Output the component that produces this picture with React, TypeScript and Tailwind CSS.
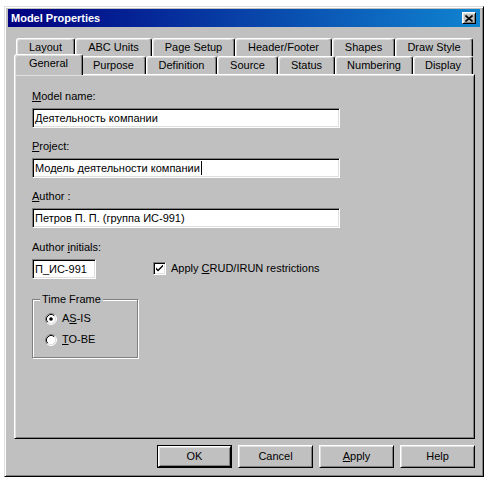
import { FC, ReactNode } from "react";

type TabDef = { label: ReactNode; w: string; active?: boolean };

const backRow: TabDef[] = [
  { label: "Layout", w: "w-[59px]" },
  { label: "ABC Units", w: "w-[77px]" },
  { label: "Page Setup", w: "w-[83px]" },
  { label: "Header/Footer", w: "w-[97px]" },
  { label: "Shapes", w: "w-[63px]" },
  { label: "Draw Style", w: "w-[78px]" }
];

const frontRow: TabDef[] = [
  { label: "General", w: "w-[69px]", active: true },
  { label: "Purpose", w: "w-[65px]" },
  { label: "Definition", w: "w-[71px]" },
  { label: "Source", w: "w-[61px]" },
  { label: "Status", w: "w-[57px]" },
  { label: "Numbering", w: "w-[78px]" },
  { label: "Display", w: "w-[60px]" }
];

const raised =
  "border border-t-white border-l-white border-r-black border-b-black shadow-[inset_1px_1px_#dfdfdf,inset_-1px_-1px_#808080]";
const sunken =
  "border border-t-[#808080] border-l-[#808080] border-r-white border-b-white shadow-[inset_1px_1px_#000,inset_-1px_-1px_#dfdfdf]";

const Tab: FC<TabDef> = ({ label, w, active }) =>
  active ? (
    <div
      className={`relative z-10 -mx-[2px] -mt-[2px] flex h-[21px] ${w} items-start justify-center rounded-t-[3px] border-l border-r border-t border-l-white border-r-black border-t-white bg-[#c0c0c0] pt-[2px] shadow-[inset_-1px_0_#808080,inset_1px_1px_#dfdfdf]`}
    >
      {label}
    </div>
  ) : (
    <div
      className={`flex h-[18px] ${w} items-center justify-center rounded-t-[3px] border-l border-r border-t border-l-white border-r-black border-t-white shadow-[inset_-1px_0_#808080,inset_1px_1px_#dfdfdf]`}
    >
      {label}
    </div>
  );

const TextField: FC<{ w: string; children: ReactNode }> = ({ w, children }) => (
  <div className={`flex h-[20px] ${w} items-center bg-white pl-[2px] ${sunken}`}>
    {children}
  </div>
);

const Radio: FC<{ checked?: boolean }> = ({ checked }) => (
  <svg width="12" height="12" viewBox="0 0 12 12">
    <circle cx="6" cy="6" r="5" fill="#fff" />
    <path d="M9.89 2.11 A5.5 5.5 0 0 0 2.11 9.89" stroke="#808080" fill="none" />
    <path d="M2.11 9.89 A5.5 5.5 0 0 0 9.89 2.11" stroke="#fff" fill="none" />
    <path d="M9.18 2.82 A4.5 4.5 0 0 0 2.82 9.18" stroke="#000" fill="none" />
    <path d="M2.82 9.18 A4.5 4.5 0 0 0 9.18 2.82" stroke="#dfdfdf" fill="none" />
    {checked && <circle cx="6" cy="6" r="1.8" fill="#000" />}
  </svg>
);

const Button: FC<{ children: ReactNode; primary?: boolean }> = ({ children, primary }) =>
  primary ? (
    <div className="h-[23px] w-[75px] border border-black">
      <div className={`flex h-full w-full items-center justify-center ${raised}`}>{children}</div>
    </div>
  ) : (
    <div className={`flex h-[23px] w-[75px] items-center justify-center ${raised}`}>{children}</div>
  );

const Label: FC<{ children: ReactNode }> = ({ children }) => (
  <div className="mb-[5px] h-[13px] leading-[13px]">{children}</div>
);

export default function App() {
  return (
    <div className="min-h-screen bg-white pl-[4px] pt-[6px] font-['Liberation_Sans',Arial,sans-serif] text-[11px] leading-[13px] text-black">
      <div className="flex h-[471px] w-[480px] flex-col border border-b-black border-l-[#dfdfdf] border-r-black border-t-[#dfdfdf] bg-[#c0c0c0] px-[3px] pt-[2px] shadow-[inset_1px_1px_#fff,inset_-1px_-1px_#808080]">
        {/* title bar */}
        <div className="flex h-[18px] items-center justify-between bg-[linear-gradient(to_right,#000080,#1084d0)] pl-[3px] pr-[4px]">
          <span className="font-bold text-white">Model Properties</span>
          <div className={`flex h-[12px] w-[14px] items-center justify-center bg-[#c0c0c0] ${raised}`}>
            <svg width="8" height="7" viewBox="0 0 8 7">
              <path d="M0.5 0.5 L7.5 6.5 M7.5 0.5 L0.5 6.5" stroke="#000" strokeWidth="1.6" />
            </svg>
          </div>
        </div>

        {/* tabs */}
        <div className="ml-[6px] mt-[11px] w-[461px]">
          <div className="flex pl-[2px]">
            {backRow.map((t, i) => (
              <Tab key={i} {...t} />
            ))}
          </div>
          <div className="flex h-[18px] pl-[2px]">
            {frontRow.map((t, i) => (
              <Tab key={i} {...t} />
            ))}
          </div>

          <div className="h-[365px] border border-b-black border-l-white border-r-black border-t-white pl-[17px] pt-[15px] shadow-[inset_1px_1px_#dfdfdf,inset_-1px_-1px_#808080]">
            <Label>
              <u>M</u>odel name:
            </Label>
            <TextField w="w-[308px]">Деятельность компании</TextField>

            <div className="mt-[12px]">
              <Label>
                <u>P</u>roject:
              </Label>
              <TextField w="w-[308px]">
                Модель деятельности компании
                <span className="ml-px inline-block h-[14px] w-px bg-black" />
              </TextField>
            </div>

            <div className="mt-[12px]">
              <Label>
                <u>A</u>uthor :
              </Label>
              <TextField w="w-[308px]">Петров П. П. (группа ИС-991)</TextField>
            </div>

            <div className="mt-[13px]">
              <Label>
                Author <u>i</u>nitials:
              </Label>
              <div className="flex items-center">
                <TextField w="w-[64px]">П_ИС-991</TextField>
                <div className="ml-[57px] flex -translate-y-[1px] items-center gap-[5px]">
                  <div className={`flex h-[13px] w-[13px] items-center justify-center bg-white ${sunken}`}>
                    <svg width="7" height="7" viewBox="0 0 7 7">
                      <path d="M0 2.5 L0 4.5 L2 6.5 L7 1.5 L7 -0.5 L2 4.5 Z" fill="#000" />
                    </svg>
                  </div>
                  <span>
                    Apply <u>C</u>RUD/IRUN restrictions
                  </span>
                </div>
              </div>
            </div>

            <div className="relative mt-[20px] h-[59px] w-[106px] border border-[#808080] pl-[12px] pt-[12px] shadow-[inset_1px_1px_#fff,1px_1px_#fff]">
              <span className="absolute -top-[7px] left-[7px] bg-[#c0c0c0] px-[2px]">Time Frame</span>
              <div className="flex flex-col gap-[8px]">
                <div className="flex h-[13px] items-center gap-[5px]">
                  <Radio checked />
                  <span>
                    A<u>S</u>-IS
                  </span>
                </div>
                <div className="flex h-[13px] items-center gap-[5px]">
                  <Radio />
                  <span>
                    <u>T</u>O-BE
                  </span>
                </div>
              </div>
            </div>
          </div>
        </div>

        {/* buttons */}
        <div className="mr-[5px] mt-[6px] flex justify-end gap-[6px]">
          <Button primary>OK</Button>
          <Button>Cancel</Button>
          <Button>
            <span>
              <u>A</u>pply
            </span>
          </Button>
          <Button>Help</Button>
        </div>
      </div>
    </div>
  );
}
